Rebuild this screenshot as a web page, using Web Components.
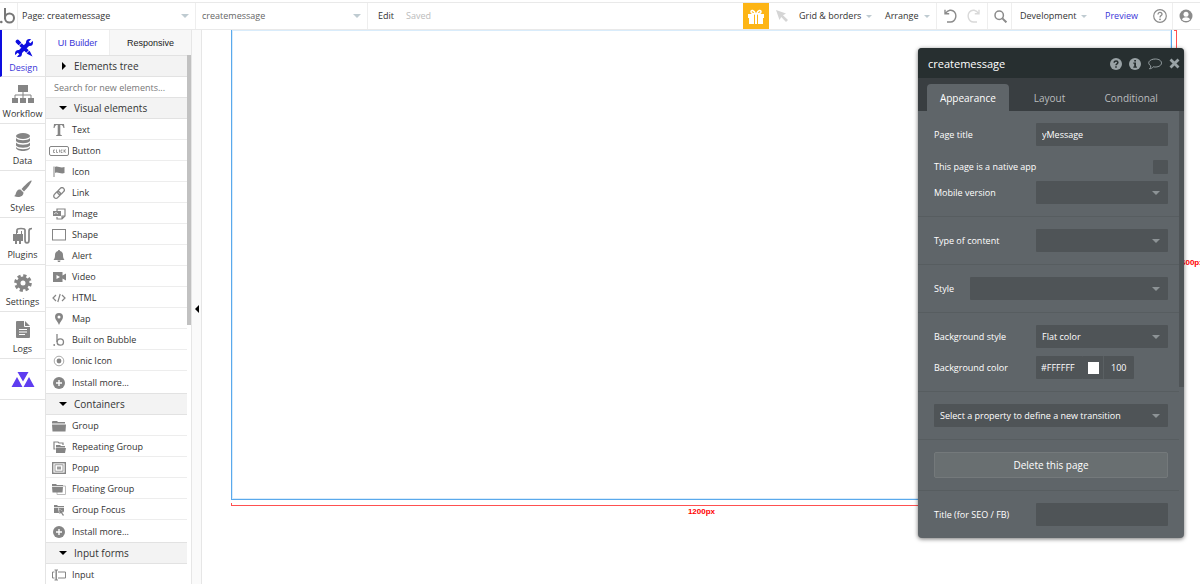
<!DOCTYPE html>
<html lang="en">
<head>
<meta charset="utf-8">
<title>Page: createmessage</title>
<style>
html,body{margin:0;height:100%}
body{font:9px/16px "Open Sans","Noto Sans",sans-serif;color:#333;background:#fff;overflow:hidden}
</style>
</head>
<body>
<bb-editor></bb-editor>
<script>
const G = '#858585';
const ICONS = {
  logo: ['0 0 16 18', `<g fill="none" stroke="#777" stroke-width="2"><path d="M5 1v11"/><circle cx="9.500" cy="11" r="4.500"/></g><circle cx="1.300" cy="15" r="1.300" fill="#777"/>`],
  gift: ['0 0 16 15', `<path fill="#fff" d="M0 5h16v4H0zM1 9h14v6H1z"/><path d="M6.500 5v10M9.500 5v10" stroke="#fdb515" stroke-width="1"/><path d="M7.500 5C5 5 3 4 3 2.500s3-2 4.500 2.500zM8.500 5C11 5 13 4 13 2.500s-3-2-4.500 2.500z" fill="none" stroke="#fff" stroke-width="1.600"/>`],
  pointer: ['0 0 12 12', `<path fill="#d5d5d5" d="M0 0l10 3.500-3 1.700L12 10l-2 2-4.800-5L3.500 10z"/>`],
  undo: ['0 0 14 14', `<path fill="none" stroke="#8b8b8b" stroke-width="1.400" d="M2 .8v4h4.200M2.500 4.500C4.500 1 9 0 11.500 3s1.500 9.500-4 10H4"/>`],
  redo: ['0 0 14 14', `<path fill="none" stroke="#d9d9d9" stroke-width="1.400" d="M12 .8v4H7.800M11.500 4.500C9.500 1 5 0 2.500 3S1 12.500 6.500 13H10"/>`],
  search: ['0 0 13 13', `<g fill="none" stroke="#8b8b8b"><circle cx="5.200" cy="5.200" r="4.200" stroke-width="1.500"/><path d="M8.400 8.400l4 4" stroke-width="2"/></g>`],
  help: ['0 0 14 14', `<circle cx="7" cy="7" r="6.300" fill="none" stroke="#8b8b8b" stroke-width="1.200"/><path d="M5 5.500c0-3 4-2.500 4-.3C9 6.700 7 6.500 7 8.400" fill="none" stroke="#8b8b8b" stroke-width="1.300"/><circle cx="7" cy="10.300" r=".9" fill="#8b8b8b"/>`],
  user: ['0 0 14 14', `<circle cx="7" cy="7" r="6.500" fill="#8b8b8b"/><circle cx="7" cy="5.300" r="2.500" fill="#fff"/><path d="M3 10.500c1-3 7-3 8 0-2 2-6 2-8 0z" fill="#fff"/>`],
  design: ['0 0 20 20', `<path fill="#0d0de0" d="M2 4.500L4.500 2 16 13.500l2.500 5-5-2.500zM4 13L13 4l3 3-9 9z"/><g fill="#0d0de0"><circle cx="4.500" cy="15.500" r="3.500"/><circle cx="15.500" cy="4.500" r="3.500"/><path d="M1.500 4q0-2.500 2.500-2.500L7 4.500 4.500 7z"/></g><path d="M0 20l4.500-4.500M20 0l-4.500 4.500" stroke="#fff" stroke-width="2.400"/><path d="M8 4.500L4.500 8M15.500 12L12 15.500" stroke="#fff"/>`],
  workflow: ['0 0 22 19', `<g fill="${G}"><path d="M6 0h10v7H6zM0 13h6v5H0zM8 13h6v5H8zM16 13h6v5h-6z"/></g><path fill="none" stroke="${G}" d="M11 7v6M3 13v-3h16v3"/>`],
  data: ['0 0 16 18', `<g fill="${G}"><ellipse cx="8" cy="3" rx="7" ry="3"/><path d="M1 5c2 3 12 3 14 0v3c-2 3-12 3-14 0z"/><path d="M1 9.500c2 3 12 3 14 0v3c-2 3-12 3-14 0z"/><path d="M1 14c2 3 12 3 14 0v1c-1 4-13 4-14 0z"/></g>`],
  brush: ['0 0 18 18', `<path fill="${G}" d="M17.500.5c1 1-4.500 8.500-7.500 11L7.500 9C10 6 16.500-.5 17.500.5zM6.500 9.500L9.500 12.500C9.500 17 4 18 0 16c2-.5 1.500-3 3-5 1-1.300 2-1.700 3.500-1.500z"/>`],
  plug: ['0 0 20 18', `<path fill="${G}" d="M0 7h3V4h1v3h4V4h1v3h1v7H8v3H6v-3H4v3H2v-3H0z"/><path fill="none" stroke="${G}" stroke-width="1.700" d="M4 6V3c0-2 8-2 8 0v10c0 4 4 4 4 0V4c0-2 1-2.500 3-2.500"/>`],
  gear: ['0 0 18 18', `<g fill="none" stroke="${G}"><circle cx="9" cy="9" r="4.500" stroke-width="4"/><circle cx="9" cy="9" r="7.300" stroke-width="3" stroke-dasharray="3.200 2.530"/></g>`],
  logs: ['0 0 14 17', `<path fill="${G}" d="M1 0h8l5 5v11q0 1-1 1H1q-1 0-1-1V1q0-1 1-1z"/><path d="M8.500 0v5.500H14M3 8.500h8M3 11h8M3 13.500h6" fill="none" stroke="#fff"/>`],
  tri: ['0 0 24 15', `<path fill="#5f3df0" d="M6 5l5.500 10H.5zM18 5l5.500 10H12.500zM6.500 0h11L12 9.500z"/>`],
  text: ['0 0 12 12', `<path fill="${G}" d="M1 0h10l.5 4h-1C10 1.500 9 1 7.300 1v9c0 1 .7 1.200 1.700 1.200v.8H3v-.8c1 0 1.700-.2 1.700-1.200V1C3 1 2 1.500 1.500 4h-1z"/>`],
  click: ['0 0 20 10', `<rect x=".5" y=".5" width="19" height="9" rx="1.500" fill="#fff" stroke="${G}"/><path d="M6 4H4.500v2.500H6M7.500 3.500v3H9M10.500 3.500v3M13.500 4H12v2.500h1.500M15 3.500v3M17 3.500L15 5l2 1.500" fill="none" stroke="${G}" stroke-width=".8"/>`],
  flag: ['0 0 12 11', `<path d="M1 .5V11" stroke="${G}"/><path fill="${G}" d="M2 1c3-1.500 5 1.500 9.500 0v6C8 8.500 5 5.500 2 7z"/>`],
  link: ['0 0 12 12', `<g fill="none" stroke="${G}" stroke-width="1.300" transform="rotate(-45 6 6)"><rect x="-.5" y="3.700" width="7.500" height="4.600" rx="2.300"/><rect x="5" y="3.700" width="7.500" height="4.600" rx="2.300"/></g>`],
  image: ['0 0 13 12', `<path fill="none" stroke="${G}" stroke-width="1.200" d="M4 3V1h8v7l-3 3H4V9M9 11V8h3"/><path fill="${G}" d="M0 3h8v5H0z"/><path d="M1 6l2-1.500 2 1.500" fill="none" stroke="#fff" stroke-width=".7"/>`],
  shape: ['0 0 14 12', `<rect x=".5" y=".5" width="13" height="10.500" fill="none" stroke="${G}"/>`],
  bell: ['0 0 12 12', `<path fill="${G}" d="M6 0c.8 0 1 .5 1 1 2 .5 3 2 3 4 0 3 .5 3.500 1.500 5H.5C1.500 8.500 2 8 2 5c0-2 1-3.500 3-4 0-.5.200-1 1-1zM4.500 10.500h3c0 2-3 2-3 0z"/>`],
  video: ['0 0 13 10', `<path fill="${G}" d="M0 0h9.500v3.500L13 1.500v7L9.500 6.500V10H0z"/><path fill="#fff" d="M3.500 3v4L7 5z"/>`],
  code: ['0 0 14 10', `<path fill="none" stroke="${G}" stroke-width="1.200" d="M4 2L1 5l3 3M10 2l3 3-3 3M8.200 1L5.800 9"/>`],
  pin: ['0 0 10 12', `<path fill="${G}" fill-rule="evenodd" d="M5 0a4 4 0 0 1 4 4c0 2.500-3 5-4 8-1-3-4-5.500-4-8a4 4 0 0 1 4-4zm0 2.500a1.500 1.500 0 1 0 0 3 1.500 1.500 0 0 0 0-3z"/>`],
  bubble: ['0 0 12 12', `<g fill="none" stroke="${G}" stroke-width="1.300"><path d="M4 0v8"/><circle cx="7.300" cy="8" r="3.200"/></g><circle cx="1.200" cy="11" r=".9" fill="${G}"/>`],
  ionic: ['0 0 12 12', `<circle cx="6" cy="6" r="4.800" fill="none" stroke="${G}" stroke-width=".7"/><circle cx="6" cy="6" r="2.400" fill="${G}"/>`],
  plus: ['0 0 12 12', `<circle cx="6" cy="6" r="6" fill="${G}"/><path d="M6 3v6M3 6h6" stroke="#fff" stroke-width="1.400"/>`],
  folder: ['0 0 14 12', `<path fill="${G}" d="M0 2q0-1 1-1h4l1 1h7v1.500H0zM0 4.500h14L13.500 11.500H.5z"/>`],
  folders: ['0 0 13 12', `<path fill="none" stroke="${G}" stroke-width="1.200" d="M2.500 8H1V1h4l1 1h4v2"/><path fill="${G}" d="M3 4h4l1 1h4v1.500H3zM3 7h10l-1 5H3z"/>`],
  popup: ['0 0 14 12', `<g fill="none" stroke="${G}"><rect x=".7" y=".7" width="12.600" height="10.600" stroke-width="1.400"/><rect x="3" y="2.800" width="8" height="6.400" stroke-width=".8"/></g><path fill="${G}" opacity=".8" d="M5 4.500h4v3H5z"/>`],
  float: ['0 0 14 12', `<path fill="none" stroke="#bbb" d="M5 9v2.500h8.500V3H11"/><path fill="${G}" d="M0 1h4l1 1h6v1.200H0zM0 4h11l-.5 5.500H.5z"/>`],
  focus: ['0 0 12 12', `<path fill="${G}" d="M1 1h3l1 1h6v1.200H1zM1 4h10v4L5 4l1 5H1z"/><path fill="${G}" d="M6 5l5 3-2 .5L11 11l-1 1-2-3-1.500 1z"/>`],
  input: ['0 0 14 12', `<path fill="none" stroke="${G}" d="M2.500 9H.5V3h2M6 3h7.500v6H6M2.500 1h1.700v10H2.500M6 1H4.200v10H6"/>`],
  qmark: ['0 0 12 12', `<circle cx="6" cy="6" r="6" fill="#99a2a5"/><path d="M4.200 4.700c0-2.500 3.700-2.200 3.700-.2C7.900 5.900 6 5.700 6 7.300" fill="none" stroke="#272f30" stroke-width="1.500"/><path d="M5.200 8.300h1.600v1.500H5.200z" fill="#272f30"/>`],
  info: ['0 0 12 12', `<circle cx="6" cy="6" r="6" fill="#99a2a5"/><path d="M5.200 2h1.800v1.600H5.200zM4.300 4.600H7v4h.9v1.200H4.300V8.600h.9V5.800h-.9z" fill="#272f30"/>`],
  chat: ['0 0 14 12', `<path fill="none" stroke="#99a2a5" d="M7.300 1C11 1 13.500 2.800 13.500 5S11 9 7.300 9c-.8 0-1.300 0-2-.2-1 1.200-2.300 1.900-3.800 2 .8-.8 1.300-1.500 1.300-2.800C-1.500 5 1.500 1 7.300 1z"/>`],
  close: ['0 0 11 11', `<path d="M1.500 1.500l8 8M9.500 1.500l-8 8" stroke="#99a2a5" stroke-width="2.800"/>`],
};
const BASE = `<style>
*{box-sizing:border-box}
button,input,select{font:inherit;color:inherit;margin:0;padding:0;border:0;background:none;border-radius:0;outline:0}
select{appearance:none}
button{white-space:nowrap}
a{color:inherit;text-decoration:none}
</style>`;
function define(name, html, ready) {
  const t = document.createElement('template');
  t.innerHTML = BASE + html;
  customElements.define(name, class extends HTMLElement {
    connectedCallback() {
      if (this.shadowRoot) return;
      this.attachShadow({mode: 'open'}).append(t.content.cloneNode(true));
      if (ready) ready(this, this.shadowRoot);
    }
  });
}

define('bb-icon', `<style>:host{display:block;flex:none}svg{display:block;width:100%;height:100%}</style>`, (el, root) => {
  const [box, body] = ICONS[el.getAttribute('name')];
  const [, , w, h] = box.split(' ');
  el.style.width = w + 'px';
  el.style.height = h + 'px';
  root.innerHTML += `<svg viewBox="${box}" aria-hidden="true">${body}</svg>`;
});

define('bb-caret', `<style>:host{display:block;flex:none;border:var(--caret-size,4px) solid transparent;border-top-color:var(--caret,#bfcbd1);border-bottom-width:0}</style>`);

define('bb-topbar', `<style>
:host{display:flex;height:30px;background:#fff;padding-top:2px}
.bar{display:flex;flex:1;min-width:0;border:solid #e9e9e9;border-width:1px 0;align-items:stretch}
.bar>*{display:flex;align-items:center;flex:none}
.logo{width:18px;border-right:1px solid #eee}
.pick{position:relative;border-right:1px solid #eee}
.pick select{width:100%;height:100%;padding:0 20px 0 4px}
.pick bb-caret{position:absolute;right:6px;pointer-events:none}
.second select{color:#666;padding-left:6px}
.edit{padding-left:10px}
.saved{padding-left:12px;color:#bbb}
.bar>.fill{flex:1 1 0}
.gift{width:26px;justify-content:center;background:#fdb515}
.sep{border-left:1px solid #eee}
.menu{gap:5px;--caret-size:3px}
a.preview{color:#3a35d8}
</style>
<div class="bar">
<span class="logo"><bb-icon name="logo"></bb-icon></span>
<span class="pick" style="width:178px"><select aria-label="Page"><option>Page: createmessage</option></select><bb-caret></bb-caret></span>
<span class="pick second" style="width:172px"><select aria-label="Element"><option>createmessage</option></select><bb-caret></bb-caret></span>
<button class="edit">Edit</button><span class="saved">Saved</span><span class="fill"></span>
<button class="gift" aria-label="Gifts"><bb-icon name="gift"></bb-icon></button>
<button style="width:30px;padding-left:7px" aria-label="Pointer"><bb-icon name="pointer"></bb-icon></button>
<button class="menu" style="width:86px">Grid &amp; borders<bb-caret></bb-caret></button>
<button class="menu" style="width:51px">Arrange<bb-caret></bb-caret></button>
<button class="sep" style="width:25px;padding-left:6px" aria-label="Undo"><bb-icon name="undo"></bb-icon></button>
<button style="width:26px;padding-left:6px" aria-label="Redo"><bb-icon name="redo"></bb-icon></button>
<button class="sep" style="width:24px;padding-left:6px" aria-label="Search"><bb-icon name="search"></bb-icon></button>
<button class="sep menu" style="width:94px;padding-left:8px">Development<bb-caret></bb-caret></button>
<a class="preview" href="#preview" style="width:48px">Preview</a>
<button style="width:19px" aria-label="Help"><bb-icon name="help"></bb-icon></button>
<button class="sep" style="width:28px;padding-left:6px" aria-label="Account"><bb-icon name="user"></bb-icon></button>
</div>`);

define('bb-rail-item', `<style>
:host{display:block;border-bottom:1px solid #e4e4e4}
a{display:flex;flex-direction:column;align-items:center;height:46px;white-space:nowrap}
.pic{display:flex;align-items:center;justify-content:center;height:20px;margin-top:8px}
:host([active]){border-left:2px solid #0d0de0;color:#3a35d8}
:host([short]) a{height:40px}
:host([short]) .pic{margin-top:10px}
.label{line-height:18px;margin-top:1px}
</style><a href="#"><span class="pic"></span><span class="label"><slot></slot></span></a>`, (el, root) => {
  root.querySelector('.pic').innerHTML = `<bb-icon name="${el.getAttribute('icon')}"></bb-icon>`;
  if (el.hasAttribute('short')) root.querySelector('a').setAttribute('aria-label', 'Extension');
});

define('bb-rail', `<style>:host{display:block;width:46px;flex:none;border-right:1px solid #e4e4e4}</style>
<nav>
<bb-rail-item icon="design" active>Design</bb-rail-item>
<bb-rail-item icon="workflow">Workflow</bb-rail-item>
<bb-rail-item icon="data">Data</bb-rail-item>
<bb-rail-item icon="brush">Styles</bb-rail-item>
<bb-rail-item icon="plug">Plugins</bb-rail-item>
<bb-rail-item icon="gear">Settings</bb-rail-item>
<bb-rail-item icon="logs">Logs</bb-rail-item>
<bb-rail-item icon="tri" short></bb-rail-item>
</nav>`);

define('bb-group', `<style>
:host{display:block}
.head{display:flex;align-items:center;width:100%;height:22px;padding-left:13px;gap:7px;background:#f3f3f3;border:solid #e2e2e2;border-width:1px 0;font-size:10px}
.mark{border:4px solid transparent;border-top-color:#000;border-bottom-width:0;width:8px}
:host([closed]) .mark{border:4px solid transparent;border-left-color:#000;border-right-width:0;width:4px;margin:0 1px 0 3px}
</style><button class="head"><span class="mark"></span><span class="label"></span></button><slot></slot>`, (el, root) => {
  root.querySelector('.label').textContent = el.getAttribute('label');
});

define('bb-row', `<style>
:host{display:block;height:21px;border-bottom:1px solid #ededed}
:host([icon=plus]){height:22px;border-bottom:0}
button{display:flex;align-items:center;width:100%;height:100%;padding-top:1px}
.pic{width:26px;display:flex;justify-content:center}
</style><button><span class="pic"></span><slot></slot></button>`, (el, root) => {
  root.querySelector('.pic').innerHTML = `<bb-icon name="${el.getAttribute('icon')}"></bb-icon>`;
});

define('bb-palette', `<style>
:host{display:flex;flex-direction:column;width:146px;flex:none;border-right:1px solid #e6e6e6;overflow:hidden}
.tabs{display:flex;height:25px;flex:none;font-family:"Liberation Sans",Roboto,sans-serif}
.tabs button{flex:1;background:#f7f7f7;color:#222}
.tabs button:first-child{flex:0 0 64px;background:#fff;color:#3a35d8;border-right:1px solid #eee}
.body{display:flex;flex:1;min-height:0}
.list{flex:1;min-width:0;overflow:hidden}
.thumb{width:4px;height:51%;background:#c1c1c1}
input{display:block;width:100%;height:20px;padding-left:8px}
input::placeholder{color:#777;opacity:1}
</style>
<div class="tabs"><button>UI Builder</button><button>Responsive</button></div>
<div class="body"><div class="list">
<bb-group label="Elements tree" closed></bb-group>
<input type="search" aria-label="Search for new elements" placeholder="Search for new elements...">
<bb-group label="Visual elements">
<bb-row icon="text">Text</bb-row><bb-row icon="click">Button</bb-row><bb-row icon="flag">Icon</bb-row><bb-row icon="link">Link</bb-row><bb-row icon="image">Image</bb-row><bb-row icon="shape">Shape</bb-row><bb-row icon="bell">Alert</bb-row><bb-row icon="video">Video</bb-row><bb-row icon="code">HTML</bb-row><bb-row icon="pin">Map</bb-row><bb-row icon="bubble">Built on Bubble</bb-row><bb-row icon="ionic">Ionic Icon</bb-row><bb-row icon="plus">Install more...</bb-row>
</bb-group>
<bb-group label="Containers">
<bb-row icon="folder">Group</bb-row><bb-row icon="folders">Repeating Group</bb-row><bb-row icon="popup">Popup</bb-row><bb-row icon="float">Floating Group</bb-row><bb-row icon="focus">Group Focus</bb-row><bb-row icon="plus">Install more...</bb-row>
</bb-group>
<bb-group label="Input forms"><bb-row icon="input">Input</bb-row></bb-group>
</div><div class="thumb"></div></div>`);

define('bb-collapse', `<style>
:host{display:flex;width:10px;flex:none;background:#fafafa;border-right:1px solid #e6e6e6}
button{flex:1;display:flex;align-items:center;justify-content:center;padding-top:4px}
span{border:4px solid transparent;border-right-color:#000;border-left-width:0}
</style><button aria-label="Collapse panel"><span></span></button>`);

define('bb-canvas', `<style>
:host{display:grid;flex:1;min-width:0;grid-template:minmax(0,1fr) 84px / minmax(0,1fr) 28px;padding-left:29px;overflow:hidden;color:#f00;font:bold 8px/10px "Liberation Sans",sans-serif}
.page{border:1px solid #5aa9ec;border-top:0;box-shadow:inset 0 0 0 1px #d9ecfb}
.right{display:flex;align-items:center;gap:4px;margin-left:2px;white-space:nowrap}
.right i{flex:none;align-self:stretch;width:3px;border:1px solid #ff5050;border-left:0}
.right span{padding-bottom:4px}
.below{text-align:center}
.below i{display:block;height:3px;margin:3px 0 1px;border:1px solid #ff5050;border-top:0}
</style>
<div class="page"></div><div class="right"><i></i><span>600px</span></div>
<div class="below"><i></i>1200px</div>`);

define('bb-select', `<style>
:host{display:flex;align-items:center;position:relative;height:23px}
select{width:100%;height:100%;background:#4f5457;padding:0 20px 0 6px;border-radius:1px}
bb-caret{position:absolute;right:8px;pointer-events:none;--caret:#8d9396}
</style><select></select><bb-caret></bb-caret>`, (el, root) => {
  const s = root.querySelector('select');
  s.setAttribute('aria-label', el.getAttribute('label'));
  s.add(new Option(el.getAttribute('value') || ''));
});

define('bb-inspector', `<style>
:host{display:flex;flex-direction:column;width:266px;background:#5f6569;color:#fff;border-radius:4px;overflow:hidden;box-shadow:0 1px 4px rgba(0,0,0,.55)}
header{display:flex;align-items:center;height:30px;padding:1px 4px 0 10px;background:#272f30;gap:7px}
h2{font:11px/16px "Open Sans",sans-serif;margin:0;flex:1}
header button{display:flex}
.tabs{display:flex;height:33px;padding:6px 12px 0 9px;background:#393e41;color:#b9bcbe;font-size:10px}
.tabs button{flex:1}
.tabs button.on{background:#5f6569;color:#fff;border-radius:4px 4px 0 0}
.body{display:flex}
form{flex:1;min-width:0}
.thumb{width:5px;height:276px;background:#4f5457}
section{display:grid;gap:8px;padding:12px 11px 12px 16px;border-bottom:1px solid #575d60}
section:last-child{border:0}
.row{display:grid;grid-template-columns:102px 1fr;align-items:center;min-height:23px}
.row.style{grid-template-columns:36px 1fr}
.row.check{grid-template-columns:1fr 15px;min-height:14px;height:14px;margin-top:5px}
input{height:23px;background:#4f5457;padding:0 6px;border-radius:1px;width:100%;min-width:0}
input[type=checkbox]{appearance:none;height:14px;width:15px;padding:0}
.color{display:grid;grid-template-columns:47px 20px 31px;justify-content:start}
.color>*{background:#4f5457}
.color input{padding:0 0 0 5px}
.color input:last-child{border-left:1px solid #5a6063;padding-left:7px}
.swatch{display:flex;align-items:center;justify-content:center}
.swatch::before{content:"";width:11px;height:12px;background:#fff}
.delete{height:26px;background:#696f71;border:1px solid #74797b;border-radius:2px;font-size:10px}
</style>
<header><h2>createmessage</h2>
<button aria-label="Help"><bb-icon name="qmark"></bb-icon></button><button aria-label="Info"><bb-icon name="info"></bb-icon></button><button aria-label="Comment"><bb-icon name="chat"></bb-icon></button><button aria-label="Close"><bb-icon name="close"></bb-icon></button></header>
<div class="tabs"><button class="on">Appearance</button><button>Layout</button><button>Conditional</button></div>
<div class="body"><form>
<section>
<div class="row"><label for="t">Page title</label><input id="t" value="yMessage"></div>
<div class="row check"><label for="n">This page is a native app</label><input id="n" type="checkbox"></div>
<div class="row"><span>Mobile version</span><bb-select label="Mobile version"></bb-select></div>
</section>
<section><div class="row"><span>Type of content</span><bb-select label="Type of content"></bb-select></div></section>
<section><div class="row style"><span>Style</span><bb-select label="Style"></bb-select></div></section>
<section>
<div class="row"><span>Background style</span><bb-select label="Background style" value="Flat color"></bb-select></div>
<div class="row"><label for="c">Background color</label><div class="color"><input id="c" value="#FFFFFF"><button type="button" class="swatch" aria-label="Pick color"></button><input aria-label="Opacity" value="100"></div></div>
</section>
<section><bb-select label="Transition" value="Select a property to define a new transition"></bb-select></section>
<section><button type="button" class="delete">Delete this page</button></section>
<section><div class="row"><label for="s">Title (for SEO / FB)</label><input id="s"></div></section>
</form><div class="thumb"></div></div>`);

define('bb-editor', `<style>
:host{display:flex;flex-direction:column;height:100vh;position:relative}
main{display:flex;flex:1;min-height:0}
bb-inspector{position:absolute;top:48px;right:16px}
</style>
<bb-topbar></bb-topbar>
<main><bb-rail></bb-rail><bb-palette></bb-palette><bb-collapse></bb-collapse><bb-canvas></bb-canvas></main>
<bb-inspector></bb-inspector>`);
</script>
</body>
</html>
